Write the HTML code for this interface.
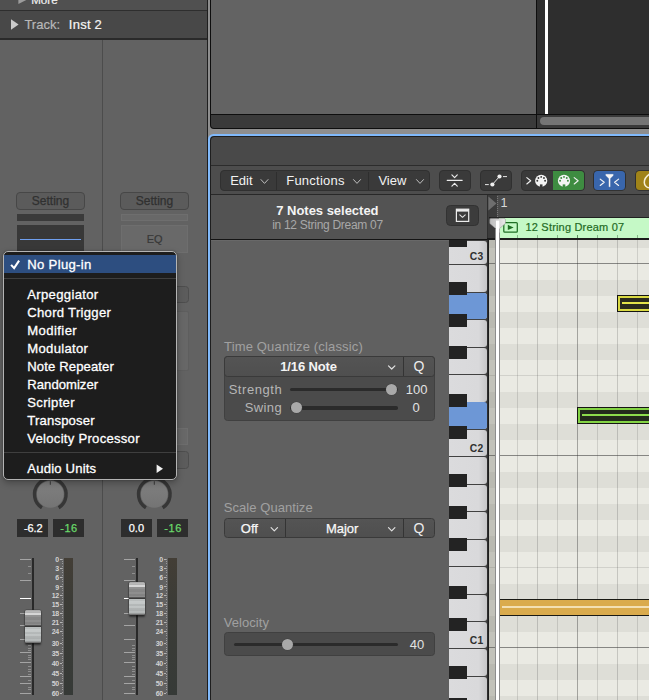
<!DOCTYPE html>
<html><head><meta charset="utf-8"><title>Logic Pro – MIDI FX menu</title>
<style>
html,body{margin:0;padding:0;}
body{width:649px;height:700px;overflow:hidden;position:relative;background:#8e8e8e;font-family:"Liberation Sans",sans-serif;-webkit-font-smoothing:antialiased;}
#root{position:absolute;left:0;top:0;width:649px;height:700px;overflow:hidden;}
#root div,#root svg{position:absolute;}
.t{white-space:nowrap;}
</style></head><body><div id="root">
<div style="left:0px;top:0px;width:207px;height:700px;background:#626262;"></div>
<div style="left:0px;top:0px;width:207px;height:10px;background:#505050;"></div>
<div class="t" style="top:-7.92px;font-size:11.6px;line-height:15px;color:#f0f0f0;left:31.2px;-webkit-text-stroke:0.2px #f0f0f0;">More</div>
<div style="left:0px;top:9.6px;width:207px;height:1.4px;background:#2e2e2e;"></div>
<div style="left:0px;top:11px;width:207px;height:27px;background:#484848;"></div>
<div class="t" style="top:16.00px;font-size:13px;line-height:17px;color:#b8b8b8;letter-spacing:0.02px;left:24.4px;-webkit-text-stroke:0.2px #b8b8b8;">Track:</div>
<div class="t" style="top:16.00px;font-size:13px;line-height:17px;color:#f6f6f6;letter-spacing:0.25px;left:68.8px;-webkit-text-stroke:0.2px #f6f6f6;">Inst 2</div>
<div style="left:0px;top:38px;width:207px;height:1.8px;background:#2a2a2a;"></div>
<svg style="left:0;top:0" width="207" height="40"><polygon points="18.4,-6 18.4,4.1 28.2,-1" fill="#9c9c9c"/><polygon points="11,19.3 11,29.7 18.6,24.5" fill="#cacaca"/></svg>
<div style="left:102px;top:40px;width:1px;height:660px;background:#4c4c4c;"></div>
<div style="left:16px;top:192px;width:69px;height:18px;background:#5b5b5b;box-sizing:border-box;border:1px solid #474747;border-radius:4px;"></div>
<div class="t" style="top:192.74px;font-size:12px;line-height:16px;color:#303030;letter-spacing:0.03px;left:16.5px;width:68px;text-align:center;-webkit-text-stroke:0.25px #303030;">Setting</div>
<div style="left:17px;top:214px;width:67px;height:7px;background:#3a3a3a;"></div>
<div style="left:17px;top:225px;width:67px;height:29px;background:#383838;"></div>
<div style="left:20px;top:239.2px;width:61px;height:1.1px;background:#6f9fee;"></div>
<svg style="left:28px;top:472px" width="46" height="46" viewBox="28 472 46 46"><defs><linearGradient id="kg0" x1="0" y1="0" x2="0" y2="1"><stop offset="0" stop-color="#808080"/><stop offset="1" stop-color="#747474"/></linearGradient></defs><path d="M41.93 507.70 A15.8 15.8 0 1 1 58.67 507.70" fill="none" stroke="#363636" stroke-width="3.4"/><circle cx="50.3" cy="494.3" r="13.4" fill="url(#kg0)"/><line x1="50.3" y1="481.2" x2="50.3" y2="484.8" stroke="#3a3a3a" stroke-width="1"/></svg>
<div style="left:17px;top:519px;width:31px;height:17.6px;background:#2d2d2d;"></div>
<div style="left:53px;top:519px;width:31px;height:17.6px;background:#2d2d2d;"></div>
<div style="left:120px;top:192px;width:69px;height:18px;background:#5b5b5b;box-sizing:border-box;border:1px solid #474747;border-radius:4px;"></div>
<div class="t" style="top:192.74px;font-size:12px;line-height:16px;color:#303030;letter-spacing:0.03px;left:120.5px;width:68px;text-align:center;-webkit-text-stroke:0.25px #303030;">Setting</div>
<div style="left:121px;top:214.2px;width:67px;height:6.6px;background:#686868;box-sizing:border-box;border:1px solid #6e6e6e;"></div>
<div style="left:121px;top:225.2px;width:67px;height:28px;background:#696969;box-sizing:border-box;border:1px solid #6e6e6e;"></div>
<div class="t" style="top:231.79px;font-size:11px;line-height:14px;color:#383838;left:124.6px;width:60px;text-align:center;-webkit-text-stroke:0.2px #383838;">EQ</div>
<div style="left:121px;top:286.4px;width:67.6px;height:16.6px;background:#5c5c5c;box-sizing:border-box;border:1px solid #4e4e4e;border-radius:3.5px;"></div>
<div style="left:121px;top:311px;width:67.6px;height:59.6px;background:#676767;box-sizing:border-box;border:1px solid #5e5e5e;border-radius:2px;"></div>
<div style="left:121px;top:428.2px;width:66.6px;height:17.3px;background:#686868;box-sizing:border-box;border:1px solid #6d6d6d;"></div>
<div style="left:121px;top:451.4px;width:67.6px;height:17.3px;background:#5c5c5c;box-sizing:border-box;border:1px solid #4e4e4e;border-radius:3.5px;"></div>
<svg style="left:132px;top:472px" width="46" height="46" viewBox="132 472 46 46"><defs><linearGradient id="kg104" x1="0" y1="0" x2="0" y2="1"><stop offset="0" stop-color="#808080"/><stop offset="1" stop-color="#747474"/></linearGradient></defs><path d="M145.93 507.70 A15.8 15.8 0 1 1 162.67 507.70" fill="none" stroke="#363636" stroke-width="3.4"/><circle cx="154.3" cy="494.3" r="13.4" fill="url(#kg104)"/><line x1="154.3" y1="481.2" x2="154.3" y2="484.8" stroke="#3a3a3a" stroke-width="1"/></svg>
<div style="left:121px;top:519px;width:31px;height:17.6px;background:#2d2d2d;"></div>
<div style="left:157px;top:519px;width:31px;height:17.6px;background:#2d2d2d;"></div>
<div style="left:20px;top:559px;width:11.4px;height:1.1px;background:#a4a4a4;"></div>
<div style="left:20px;top:580px;width:11.4px;height:1.1px;background:#a4a4a4;"></div>
<div style="left:20px;top:613px;width:11.4px;height:1.1px;background:#a4a4a4;"></div>
<div style="left:20px;top:625px;width:11.4px;height:1.1px;background:#a4a4a4;"></div>
<div style="left:20px;top:639px;width:11.4px;height:1.1px;background:#a4a4a4;"></div>
<div style="left:20px;top:652px;width:11.4px;height:1.1px;background:#a4a4a4;"></div>
<div style="left:20px;top:662px;width:11.4px;height:1.1px;background:#a4a4a4;"></div>
<div style="left:20px;top:676px;width:11.4px;height:1.1px;background:#a4a4a4;"></div>
<div style="left:20px;top:683px;width:11.4px;height:1.1px;background:#a4a4a4;"></div>
<div style="left:20px;top:693px;width:11.4px;height:1.1px;background:#a4a4a4;"></div>
<div style="left:20px;top:597.8px;width:11.4px;height:1.5px;background:#ffffff;"></div>
<div style="left:28px;top:566px;width:3.4px;height:1px;background:#8f8f8f;"></div>
<div style="left:28px;top:573px;width:3.4px;height:1px;background:#8f8f8f;"></div>
<div style="left:28px;top:645px;width:3.4px;height:1px;background:#8f8f8f;"></div>
<div style="left:28px;top:648px;width:3.4px;height:1px;background:#8f8f8f;"></div>
<div style="left:28px;top:650px;width:3.4px;height:1px;background:#8f8f8f;"></div>
<div style="left:28px;top:655px;width:3.4px;height:1px;background:#8f8f8f;"></div>
<div style="left:28px;top:657px;width:3.4px;height:1px;background:#8f8f8f;"></div>
<div style="left:28px;top:659px;width:3.4px;height:1px;background:#8f8f8f;"></div>
<div style="left:28px;top:666px;width:3.4px;height:1px;background:#8f8f8f;"></div>
<div style="left:28px;top:669px;width:3.4px;height:1px;background:#8f8f8f;"></div>
<div style="left:28px;top:671px;width:3.4px;height:1px;background:#8f8f8f;"></div>
<div style="left:28px;top:674px;width:3.4px;height:1px;background:#8f8f8f;"></div>
<div style="left:28px;top:680px;width:3.4px;height:1px;background:#8f8f8f;"></div>
<div style="left:28px;top:687px;width:3.4px;height:1px;background:#8f8f8f;"></div>
<div style="left:28px;top:689px;width:3.4px;height:1px;background:#8f8f8f;"></div>
<div style="left:31.8px;top:558px;width:2.1px;height:136.6px;background:#292929;"></div>
<div style="left:24.7px;top:609.7px;width:16.4px;height:33.6px;background:repeating-linear-gradient(180deg, rgba(0,0,0,0) 0 2.4px, rgba(0,0,0,0.07) 2.4px 4.8px), linear-gradient(180deg,#a2a2a2 0%,#bababa 5%,#c4c4c4 9%,#e6e6e6 10%,#e6e6e6 14%,#939393 16%,#8b8b8b 46%,#3a3a3a 47.5%,#3a3a3a 50.5%,#c9cdcd 52%,#bec2c2 80%,#b2b6b6 95%,#7e7e7e 97%,#7a7a7a 100%);border-radius:1.5px;box-shadow:0 1.5px 2px rgba(0,0,0,0.5), 0 0 0 0.5px rgba(50,50,50,0.55);"></div>
<div class="t" style="top:555.12px;font-size:7px;line-height:9px;color:#d2d2d2;font-weight:700;letter-spacing:-0.35px;left:38.9px;width:20px;text-align:right;">0</div>
<div style="left:60.1px;top:558.95px;width:2.4px;height:1.1px;background:#b4b4b4;"></div>
<div class="t" style="top:564.22px;font-size:7px;line-height:9px;color:#d2d2d2;font-weight:700;letter-spacing:-0.35px;left:38.9px;width:20px;text-align:right;">3</div>
<div style="left:60.1px;top:568.05px;width:2.4px;height:1.1px;background:#b4b4b4;"></div>
<div class="t" style="top:573.32px;font-size:7px;line-height:9px;color:#d2d2d2;font-weight:700;letter-spacing:-0.35px;left:38.9px;width:20px;text-align:right;">6</div>
<div style="left:60.1px;top:577.15px;width:2.4px;height:1.1px;background:#b4b4b4;"></div>
<div class="t" style="top:582.52px;font-size:7px;line-height:9px;color:#d2d2d2;font-weight:700;letter-spacing:-0.35px;left:38.9px;width:20px;text-align:right;">9</div>
<div style="left:60.1px;top:586.35px;width:2.4px;height:1.1px;background:#b4b4b4;"></div>
<div class="t" style="top:591.22px;font-size:7px;line-height:9px;color:#d2d2d2;font-weight:700;letter-spacing:-0.35px;left:38.9px;width:20px;text-align:right;">12</div>
<div style="left:60.1px;top:595.05px;width:2.4px;height:1.1px;background:#b4b4b4;"></div>
<div class="t" style="top:600.22px;font-size:7px;line-height:9px;color:#d2d2d2;font-weight:700;letter-spacing:-0.35px;left:38.9px;width:20px;text-align:right;">15</div>
<div style="left:60.1px;top:604.05px;width:2.4px;height:1.1px;background:#b4b4b4;"></div>
<div class="t" style="top:609.22px;font-size:7px;line-height:9px;color:#d2d2d2;font-weight:700;letter-spacing:-0.35px;left:38.9px;width:20px;text-align:right;">18</div>
<div style="left:60.1px;top:613.05px;width:2.4px;height:1.1px;background:#b4b4b4;"></div>
<div class="t" style="top:618.32px;font-size:7px;line-height:9px;color:#d2d2d2;font-weight:700;letter-spacing:-0.35px;left:38.9px;width:20px;text-align:right;">21</div>
<div style="left:60.1px;top:622.15px;width:2.4px;height:1.1px;background:#b4b4b4;"></div>
<div class="t" style="top:627.32px;font-size:7px;line-height:9px;color:#d2d2d2;font-weight:700;letter-spacing:-0.35px;left:38.9px;width:20px;text-align:right;">24</div>
<div style="left:60.1px;top:631.15px;width:2.4px;height:1.1px;background:#b4b4b4;"></div>
<div class="t" style="top:639.12px;font-size:7px;line-height:9px;color:#d2d2d2;font-weight:700;letter-spacing:-0.35px;left:38.9px;width:20px;text-align:right;">30</div>
<div style="left:60.1px;top:642.95px;width:2.4px;height:1.1px;background:#b4b4b4;"></div>
<div class="t" style="top:649.32px;font-size:7px;line-height:9px;color:#d2d2d2;font-weight:700;letter-spacing:-0.35px;left:38.9px;width:20px;text-align:right;">35</div>
<div style="left:60.1px;top:653.15px;width:2.4px;height:1.1px;background:#b4b4b4;"></div>
<div class="t" style="top:659.12px;font-size:7px;line-height:9px;color:#d2d2d2;font-weight:700;letter-spacing:-0.35px;left:38.9px;width:20px;text-align:right;">40</div>
<div style="left:60.1px;top:662.95px;width:2.4px;height:1.1px;background:#b4b4b4;"></div>
<div class="t" style="top:669.02px;font-size:7px;line-height:9px;color:#d2d2d2;font-weight:700;letter-spacing:-0.35px;left:38.9px;width:20px;text-align:right;">45</div>
<div style="left:60.1px;top:672.85px;width:2.4px;height:1.1px;background:#b4b4b4;"></div>
<div class="t" style="top:679.12px;font-size:7px;line-height:9px;color:#d2d2d2;font-weight:700;letter-spacing:-0.35px;left:38.9px;width:20px;text-align:right;">50</div>
<div style="left:60.1px;top:682.95px;width:2.4px;height:1.1px;background:#b4b4b4;"></div>
<div class="t" style="top:688.82px;font-size:7px;line-height:9px;color:#d2d2d2;font-weight:700;letter-spacing:-0.35px;left:38.9px;width:20px;text-align:right;">60</div>
<div style="left:60.1px;top:692.65px;width:2.4px;height:1.1px;background:#b4b4b4;"></div>
<div style="left:62px;top:559px;width:1px;height:135px;background:repeating-linear-gradient(180deg,#9a9a9a 0 1px,rgba(0,0,0,0) 1px 2.25px);"></div>
<div style="left:63.5px;top:557.8px;width:9.2px;height:137.4px;background:linear-gradient(180deg,#433e36 0%,#3c3c37 30%,#363a37 100%);"></div>
<div style="left:124px;top:559px;width:11.4px;height:1.1px;background:#a4a4a4;"></div>
<div style="left:124px;top:580px;width:11.4px;height:1.1px;background:#a4a4a4;"></div>
<div style="left:124px;top:613px;width:11.4px;height:1.1px;background:#a4a4a4;"></div>
<div style="left:124px;top:625px;width:11.4px;height:1.1px;background:#a4a4a4;"></div>
<div style="left:124px;top:639px;width:11.4px;height:1.1px;background:#a4a4a4;"></div>
<div style="left:124px;top:652px;width:11.4px;height:1.1px;background:#a4a4a4;"></div>
<div style="left:124px;top:662px;width:11.4px;height:1.1px;background:#a4a4a4;"></div>
<div style="left:124px;top:676px;width:11.4px;height:1.1px;background:#a4a4a4;"></div>
<div style="left:124px;top:683px;width:11.4px;height:1.1px;background:#a4a4a4;"></div>
<div style="left:124px;top:693px;width:11.4px;height:1.1px;background:#a4a4a4;"></div>
<div style="left:124px;top:597.8px;width:11.4px;height:1.5px;background:#ffffff;"></div>
<div style="left:132px;top:566px;width:3.4px;height:1px;background:#8f8f8f;"></div>
<div style="left:132px;top:573px;width:3.4px;height:1px;background:#8f8f8f;"></div>
<div style="left:132px;top:645px;width:3.4px;height:1px;background:#8f8f8f;"></div>
<div style="left:132px;top:648px;width:3.4px;height:1px;background:#8f8f8f;"></div>
<div style="left:132px;top:650px;width:3.4px;height:1px;background:#8f8f8f;"></div>
<div style="left:132px;top:655px;width:3.4px;height:1px;background:#8f8f8f;"></div>
<div style="left:132px;top:657px;width:3.4px;height:1px;background:#8f8f8f;"></div>
<div style="left:132px;top:659px;width:3.4px;height:1px;background:#8f8f8f;"></div>
<div style="left:132px;top:666px;width:3.4px;height:1px;background:#8f8f8f;"></div>
<div style="left:132px;top:669px;width:3.4px;height:1px;background:#8f8f8f;"></div>
<div style="left:132px;top:671px;width:3.4px;height:1px;background:#8f8f8f;"></div>
<div style="left:132px;top:674px;width:3.4px;height:1px;background:#8f8f8f;"></div>
<div style="left:132px;top:680px;width:3.4px;height:1px;background:#8f8f8f;"></div>
<div style="left:132px;top:687px;width:3.4px;height:1px;background:#8f8f8f;"></div>
<div style="left:132px;top:689px;width:3.4px;height:1px;background:#8f8f8f;"></div>
<div style="left:135.8px;top:558px;width:2.1px;height:136.6px;background:#292929;"></div>
<div style="left:128.7px;top:581.6px;width:16.4px;height:33.6px;background:repeating-linear-gradient(180deg, rgba(0,0,0,0) 0 2.4px, rgba(0,0,0,0.07) 2.4px 4.8px), linear-gradient(180deg,#a2a2a2 0%,#bababa 5%,#c4c4c4 9%,#e6e6e6 10%,#e6e6e6 14%,#939393 16%,#8b8b8b 46%,#3a3a3a 47.5%,#3a3a3a 50.5%,#c9cdcd 52%,#bec2c2 80%,#b2b6b6 95%,#7e7e7e 97%,#7a7a7a 100%);border-radius:1.5px;box-shadow:0 1.5px 2px rgba(0,0,0,0.5), 0 0 0 0.5px rgba(50,50,50,0.55);"></div>
<div class="t" style="top:555.12px;font-size:7px;line-height:9px;color:#d2d2d2;font-weight:700;letter-spacing:-0.35px;left:142.9px;width:20px;text-align:right;">0</div>
<div style="left:164.1px;top:558.95px;width:2.4px;height:1.1px;background:#b4b4b4;"></div>
<div class="t" style="top:564.22px;font-size:7px;line-height:9px;color:#d2d2d2;font-weight:700;letter-spacing:-0.35px;left:142.9px;width:20px;text-align:right;">3</div>
<div style="left:164.1px;top:568.05px;width:2.4px;height:1.1px;background:#b4b4b4;"></div>
<div class="t" style="top:573.32px;font-size:7px;line-height:9px;color:#d2d2d2;font-weight:700;letter-spacing:-0.35px;left:142.9px;width:20px;text-align:right;">6</div>
<div style="left:164.1px;top:577.15px;width:2.4px;height:1.1px;background:#b4b4b4;"></div>
<div class="t" style="top:582.52px;font-size:7px;line-height:9px;color:#d2d2d2;font-weight:700;letter-spacing:-0.35px;left:142.9px;width:20px;text-align:right;">9</div>
<div style="left:164.1px;top:586.35px;width:2.4px;height:1.1px;background:#b4b4b4;"></div>
<div class="t" style="top:591.22px;font-size:7px;line-height:9px;color:#d2d2d2;font-weight:700;letter-spacing:-0.35px;left:142.9px;width:20px;text-align:right;">12</div>
<div style="left:164.1px;top:595.05px;width:2.4px;height:1.1px;background:#b4b4b4;"></div>
<div class="t" style="top:600.22px;font-size:7px;line-height:9px;color:#d2d2d2;font-weight:700;letter-spacing:-0.35px;left:142.9px;width:20px;text-align:right;">15</div>
<div style="left:164.1px;top:604.05px;width:2.4px;height:1.1px;background:#b4b4b4;"></div>
<div class="t" style="top:609.22px;font-size:7px;line-height:9px;color:#d2d2d2;font-weight:700;letter-spacing:-0.35px;left:142.9px;width:20px;text-align:right;">18</div>
<div style="left:164.1px;top:613.05px;width:2.4px;height:1.1px;background:#b4b4b4;"></div>
<div class="t" style="top:618.32px;font-size:7px;line-height:9px;color:#d2d2d2;font-weight:700;letter-spacing:-0.35px;left:142.9px;width:20px;text-align:right;">21</div>
<div style="left:164.1px;top:622.15px;width:2.4px;height:1.1px;background:#b4b4b4;"></div>
<div class="t" style="top:627.32px;font-size:7px;line-height:9px;color:#d2d2d2;font-weight:700;letter-spacing:-0.35px;left:142.9px;width:20px;text-align:right;">24</div>
<div style="left:164.1px;top:631.15px;width:2.4px;height:1.1px;background:#b4b4b4;"></div>
<div class="t" style="top:639.12px;font-size:7px;line-height:9px;color:#d2d2d2;font-weight:700;letter-spacing:-0.35px;left:142.9px;width:20px;text-align:right;">30</div>
<div style="left:164.1px;top:642.95px;width:2.4px;height:1.1px;background:#b4b4b4;"></div>
<div class="t" style="top:649.32px;font-size:7px;line-height:9px;color:#d2d2d2;font-weight:700;letter-spacing:-0.35px;left:142.9px;width:20px;text-align:right;">35</div>
<div style="left:164.1px;top:653.15px;width:2.4px;height:1.1px;background:#b4b4b4;"></div>
<div class="t" style="top:659.12px;font-size:7px;line-height:9px;color:#d2d2d2;font-weight:700;letter-spacing:-0.35px;left:142.9px;width:20px;text-align:right;">40</div>
<div style="left:164.1px;top:662.95px;width:2.4px;height:1.1px;background:#b4b4b4;"></div>
<div class="t" style="top:669.02px;font-size:7px;line-height:9px;color:#d2d2d2;font-weight:700;letter-spacing:-0.35px;left:142.9px;width:20px;text-align:right;">45</div>
<div style="left:164.1px;top:672.85px;width:2.4px;height:1.1px;background:#b4b4b4;"></div>
<div class="t" style="top:679.12px;font-size:7px;line-height:9px;color:#d2d2d2;font-weight:700;letter-spacing:-0.35px;left:142.9px;width:20px;text-align:right;">50</div>
<div style="left:164.1px;top:682.95px;width:2.4px;height:1.1px;background:#b4b4b4;"></div>
<div class="t" style="top:688.82px;font-size:7px;line-height:9px;color:#d2d2d2;font-weight:700;letter-spacing:-0.35px;left:142.9px;width:20px;text-align:right;">60</div>
<div style="left:164.1px;top:692.65px;width:2.4px;height:1.1px;background:#b4b4b4;"></div>
<div style="left:166px;top:559px;width:1px;height:135px;background:repeating-linear-gradient(180deg,#9a9a9a 0 1px,rgba(0,0,0,0) 1px 2.25px);"></div>
<div style="left:167.5px;top:557.8px;width:9.2px;height:137.4px;background:linear-gradient(180deg,#433e36 0%,#3c3c37 30%,#363a37 100%);"></div>
<div class="t" style="top:520.99px;font-size:11px;line-height:14px;color:#fff;letter-spacing:-0.1px;left:17.7px;width:31px;text-align:center;-webkit-text-stroke:0.25px #fff;">-6.2</div>
<div class="t" style="top:520.99px;font-size:11px;line-height:14px;color:#6ad96a;letter-spacing:0.6px;left:53.5px;width:31px;text-align:center;-webkit-text-stroke:0.25px #6ad96a;">-16</div>
<div class="t" style="top:520.99px;font-size:11px;line-height:14px;color:#fff;left:120.9px;width:31px;text-align:center;-webkit-text-stroke:0.25px #fff;">0.0</div>
<div class="t" style="top:520.99px;font-size:11px;line-height:14px;color:#6ad96a;letter-spacing:0.6px;left:157.6px;width:31px;text-align:center;-webkit-text-stroke:0.25px #6ad96a;">-16</div>
<div style="left:206.6px;top:0px;width:1.5px;height:700px;background:#1e1e1e;"></div>
<div style="left:209.8px;top:-4px;width:445px;height:132.7px;background:#0e0e0e;border-radius:4px;"></div>
<div style="left:211px;top:0px;width:325.2px;height:114px;background:#636363;"></div>
<div style="left:537.4px;top:0px;width:112px;height:114px;background:#2e2e2e;"></div>
<div style="left:544.8px;top:0px;width:3.6px;height:114px;background:#ffffff;"></div>
<div style="left:211px;top:115px;width:325.2px;height:12.6px;background:#3a3a3a;border-radius:0 0 0 3px;"></div>
<div style="left:537.4px;top:115px;width:112px;height:12.6px;background:#3a3a3a;"></div>
<div style="left:540px;top:117.2px;width:120px;height:7.6px;background:#757575;border-radius:4px;"></div>
<div style="left:208.4px;top:134.2px;width:450px;height:580px;background:#80b9fb;border-radius:5.5px;"></div>
<div style="left:210.2px;top:136px;width:450px;height:580px;background:#1e1e1e;border-radius:4px;"></div>
<div style="left:211px;top:136.6px;width:440px;height:29px;background:#494949;border-radius:3.5px 0 0 0;"></div>
<div style="left:211px;top:164.9px;width:440px;height:1.1px;background:#2c2c2c;"></div>
<div style="left:211px;top:166px;width:440px;height:28.4px;background:#4d4d4d;"></div>
<div style="left:211px;top:194.2px;width:440px;height:1.2px;background:#282828;"></div>
<div style="left:211px;top:195.4px;width:276.4px;height:43.2px;background:#535353;"></div>
<div style="left:487.2px;top:195.4px;width:1px;height:505px;background:#2e2e2e;"></div>
<div style="left:488.6px;top:195.4px;width:162px;height:21.6px;background:#4a4a4a;"></div>
<div style="left:488.2px;top:195.4px;width:9px;height:44px;background:#3b3b3b;"></div>
<div style="left:211px;top:238.5px;width:276.4px;height:1.3px;background:#141414;"></div>
<div style="left:487.4px;top:238.4px;width:170px;height:1.5px;background:#1c1c1c;"></div>
<div style="left:211px;top:239.8px;width:237.6px;height:461px;background:#606060;"></div>
<div style="left:211px;top:239.8px;width:237.6px;height:1px;background:#686868;"></div>
<div style="left:219.6px;top:170.4px;width:210.2px;height:20.2px;background:#3a3a3a;box-sizing:border-box;border:1px solid #303030;border-radius:4px;"></div>
<div style="left:275.6px;top:171.6px;width:1px;height:18px;background:#2e2e2e;"></div>
<div style="left:367.7px;top:171.6px;width:1px;height:18px;background:#2e2e2e;"></div>
<div class="t" style="top:172.20px;font-size:13px;line-height:17px;color:#f2f2f2;left:230.2px;">Edit</div>
<div class="t" style="top:172.20px;font-size:13px;line-height:17px;color:#f2f2f2;letter-spacing:0.25px;left:286.2px;">Functions</div>
<div class="t" style="top:172.20px;font-size:13px;line-height:17px;color:#f2f2f2;left:378.4px;">View</div>
<svg style="left:258px;top:175px" width="13" height="13" viewBox="-6.5 -6.5 13 13"><polyline points="-3.5,-1.9 0,1.9 3.5,-1.9" fill="none" stroke="#c0c0c0" stroke-width="1.0" stroke-linecap="round" stroke-linejoin="round"/></svg>
<svg style="left:351px;top:175px" width="12" height="13" viewBox="-6 -6.5 12 13"><polyline points="-3.5,-1.9 0,1.9 3.5,-1.9" fill="none" stroke="#c0c0c0" stroke-width="1.0" stroke-linecap="round" stroke-linejoin="round"/></svg>
<svg style="left:414px;top:175px" width="12" height="13" viewBox="-6 -6.5 12 13"><polyline points="-3.5,-1.9 0,1.9 3.5,-1.9" fill="none" stroke="#c0c0c0" stroke-width="1.0" stroke-linecap="round" stroke-linejoin="round"/></svg>
<div style="left:438.5px;top:170.4px;width:32.2px;height:20.2px;background:#3a3a3a;box-sizing:border-box;border:1px solid #303030;border-radius:4px;"></div>
<svg style="left:438px;top:170px" width="33" height="21" viewBox="438 170 33 21"><g fill="none" stroke="#ececec" stroke-width="1.15" stroke-linecap="round" stroke-linejoin="round"><line x1="447.2" y1="180.3" x2="462.2" y2="180.3"/><polyline points="451.9,174.8 454.6,177.6 457.3,174.8"/><polyline points="451.9,186.1 454.6,183.3 457.3,186.1"/></g></svg>
<div style="left:479.5px;top:170.4px;width:32.2px;height:20.2px;background:#3a3a3a;box-sizing:border-box;border:1px solid #303030;border-radius:4px;"></div>
<svg style="left:479px;top:170px" width="33" height="21" viewBox="479 170 33 21"><g stroke="#e6e6e6" stroke-width="1" stroke-linecap="round"><line x1="485.4" y1="184.6" x2="488.4" y2="184.6"/><line x1="503.4" y1="176.6" x2="506.6" y2="176.6"/><line x1="492.4" y1="184.5" x2="499.5" y2="176.5"/></g><circle cx="492.4" cy="184.5" r="2.1" fill="#f0f0f0"/><circle cx="499.5" cy="176.5" r="2.1" fill="#f0f0f0"/></svg>
<div style="left:520.5px;top:170.4px;width:64px;height:20.2px;background:#3a3a3a;box-sizing:border-box;border:1px solid #303030;border-radius:4px;"></div>
<div style="left:552.8px;top:171.4px;width:31px;height:18.6px;background:#3e8c41;border-radius:0 3.5px 3.5px 0;"></div>
<svg style="left:520px;top:170px" width="65" height="21" viewBox="520 170 65 21"><circle cx="541.2" cy="180.8" r="6.1" fill="#f4f4f4"/><circle cx="537.30" cy="180.80" r="0.95" fill="#3a3a3a"/><circle cx="538.44" cy="178.04" r="0.95" fill="#3a3a3a"/><circle cx="541.20" cy="176.90" r="0.95" fill="#3a3a3a"/><circle cx="543.96" cy="178.04" r="0.95" fill="#3a3a3a"/><circle cx="545.10" cy="180.80" r="0.95" fill="#3a3a3a"/><rect x="539.9000000000001" y="184.4" width="2.6" height="3" fill="#3a3a3a"/><circle cx="564" cy="180.8" r="6.1" fill="#f4f4f4"/><circle cx="560.10" cy="180.80" r="0.95" fill="#3e8c41"/><circle cx="561.24" cy="178.04" r="0.95" fill="#3e8c41"/><circle cx="564.00" cy="176.90" r="0.95" fill="#3e8c41"/><circle cx="566.76" cy="178.04" r="0.95" fill="#3e8c41"/><circle cx="567.90" cy="180.80" r="0.95" fill="#3e8c41"/><rect x="562.7" y="184.4" width="2.6" height="3" fill="#3e8c41"/><g fill="none" stroke="#f0f0f0" stroke-width="1.15" stroke-linecap="round" stroke-linejoin="round"><polyline points="526.8,177.6 530.7,180.8 526.8,184"/><polyline points="574.2,177.6 578.1,180.8 574.2,184"/></g></svg>
<div style="left:594.4px;top:170.9px;width:30.4px;height:19.1px;background:#3966ac;border-radius:3.5px;box-shadow:0 0 0 0.8px #2a2a2a;"></div>
<svg style="left:594px;top:170px" width="31" height="21" viewBox="594 170 31 21"><g fill="none" stroke="#f4f4f4" stroke-width="1.15" stroke-linecap="round" stroke-linejoin="round"><polyline points="600.2,179.1 604.2,182.3 600.2,185.5"/><polyline points="618.6,179.1 614.6,182.3 618.6,185.5"/></g><polygon points="605.8,174.3 613.2,174.3 613.2,175.5 610.15,178.5 610.15,186.8 608.95,186.8 608.95,178.5 605.8,175.5" fill="#f6f6f6" stroke="#f6f6f6" stroke-width="0.3" stroke-linejoin="round"/></svg>
<div style="left:636.1px;top:170.9px;width:29.4px;height:19.1px;background:#a08318;border-radius:3.5px;box-shadow:0 0 0 0.8px #2a2a2a;"></div>
<svg style="left:635px;top:170px" width="15" height="21" viewBox="635 170 15 21"><path d="M649.4 174.2 C646.8 176 644.3 178.8 644.3 182.4 A5.5 5.5 0 0 0 649.8 187.9" fill="none" stroke="#f6efd6" stroke-width="1.5" stroke-linecap="round"/></svg>
<div class="t" style="top:202.00px;font-size:13px;line-height:17px;color:#f4f4f4;font-weight:700;letter-spacing:-0.02px;left:227.4px;width:200px;text-align:center;">7 Notes selected</div>
<div class="t" style="top:216.64px;font-size:12px;line-height:16px;color:#a8a8a8;letter-spacing:-0.29px;left:227.5px;width:200px;text-align:center;">in 12 String Dream 07</div>
<div style="left:446.4px;top:205px;width:32.4px;height:20.6px;background:#3c3c3c;box-sizing:border-box;border:1px solid #323232;border-radius:4.5px;"></div>
<svg style="left:447px;top:205px" width="32" height="21" viewBox="447 205 32 21"><rect x="456.4" y="209.2" width="12.3" height="12.2" fill="none" stroke="#ededed" stroke-width="1.2"/><rect x="456.4" y="209.2" width="12.3" height="2.4" fill="#ededed"/><polyline points="459.8,214.9 462.5,217.3 465.2,214.9" fill="none" stroke="#e4e4e4" stroke-width="1.1" stroke-linecap="round" stroke-linejoin="round"/></svg>
<div class="t" style="top:337.80px;font-size:13px;line-height:17px;color:#a0a0a0;letter-spacing:0.15px;left:224.1px;">Time Quantize (classic)</div>
<div style="left:224.1px;top:356.4px;width:210.5px;height:64.6px;background:#4b4b4b;box-sizing:border-box;border:1px solid #404040;border-radius:3.5px;"></div>
<div style="left:224.1px;top:356.4px;width:210.5px;height:20.2px;background:linear-gradient(180deg,#545454,#4f4f4f);box-sizing:border-box;border:1px solid #3a3a3a;border-radius:3.5px;"></div>
<div style="left:402.7px;top:357.4px;width:1px;height:18.2px;background:#343434;"></div>
<div class="t" style="top:358.00px;font-size:13px;line-height:17px;color:#f4f4f4;font-weight:700;letter-spacing:-0.12px;left:248.6px;width:120px;text-align:center;">1/16 Note</div>
<svg style="left:385px;top:361px" width="13" height="13" viewBox="-6.7 -6.4 13 13"><polyline points="-3.2,-1.6 0,1.6 3.2,-1.6" fill="none" stroke="#e0e0e0" stroke-width="1.2" stroke-linecap="round" stroke-linejoin="round"/></svg>
<div class="t" style="top:357.35px;font-size:14px;line-height:18px;color:#ececec;left:404px;width:30px;text-align:center;">Q</div>
<div class="t" style="top:380.60px;font-size:13px;line-height:17px;color:#b6b6b6;letter-spacing:0.55px;left:202.2px;width:80px;text-align:right;">Strength</div>
<div class="t" style="top:398.80px;font-size:13px;line-height:17px;color:#b6b6b6;letter-spacing:0.4px;left:202.1px;width:80px;text-align:right;">Swing</div>
<div style="left:290px;top:387.8px;width:108px;height:3.6px;background:#2b2b2b;border-radius:1.8px;"></div>
<div style="left:385.6px;top:384px;width:11.2px;height:11.2px;background:#a9a9a9;border-radius:50%;box-shadow:0 0 0 0.6px rgba(60,60,60,0.7);"></div>
<div style="left:290px;top:406px;width:108px;height:3.6px;background:#2b2b2b;border-radius:1.8px;"></div>
<div style="left:290.6px;top:402.2px;width:11.2px;height:11.2px;background:#a9a9a9;border-radius:50%;box-shadow:0 0 0 0.6px rgba(60,60,60,0.7);"></div>
<div class="t" style="top:380.60px;font-size:13px;line-height:17px;color:#e2e2e2;left:396.6px;width:40px;text-align:center;">100</div>
<div class="t" style="top:398.80px;font-size:13px;line-height:17px;color:#e2e2e2;left:396px;width:40px;text-align:center;">0</div>
<div class="t" style="top:498.60px;font-size:13px;line-height:17px;color:#a0a0a0;letter-spacing:0.05px;left:223.8px;">Scale Quantize</div>
<div style="left:224.1px;top:518.2px;width:210.5px;height:20.2px;background:linear-gradient(180deg,#545454,#4f4f4f);box-sizing:border-box;border:1px solid #3a3a3a;border-radius:3.5px;"></div>
<div style="left:285.3px;top:519.2px;width:1px;height:18.2px;background:#343434;"></div>
<div style="left:402.7px;top:519.2px;width:1px;height:18.2px;background:#343434;"></div>
<div class="t" style="top:520.00px;font-size:13px;line-height:17px;color:#f4f4f4;left:229.4px;width:40px;text-align:center;-webkit-text-stroke:0.25px #fff;">Off</div>
<svg style="left:268px;top:523px" width="13" height="13" viewBox="-6.3 -6.2 13 13"><polyline points="-3.2,-1.6 0,1.6 3.2,-1.6" fill="none" stroke="#e0e0e0" stroke-width="1.2" stroke-linecap="round" stroke-linejoin="round"/></svg>
<div class="t" style="top:520.00px;font-size:13px;line-height:17px;color:#f4f4f4;left:312.2px;width:60px;text-align:center;-webkit-text-stroke:0.25px #fff;">Major</div>
<svg style="left:385px;top:523px" width="13" height="13" viewBox="-6.7 -6.2 13 13"><polyline points="-3.2,-1.6 0,1.6 3.2,-1.6" fill="none" stroke="#e0e0e0" stroke-width="1.2" stroke-linecap="round" stroke-linejoin="round"/></svg>
<div class="t" style="top:519.15px;font-size:14px;line-height:18px;color:#ececec;left:404px;width:30px;text-align:center;">Q</div>
<div class="t" style="top:613.60px;font-size:13px;line-height:17px;color:#a0a0a0;letter-spacing:0.05px;left:223.8px;">Velocity</div>
<div style="left:224.1px;top:632.3px;width:210.5px;height:23.8px;background:#4b4b4b;box-sizing:border-box;border:1px solid #404040;border-radius:3.5px;"></div>
<div style="left:234px;top:642.8px;width:164.3px;height:3.6px;background:#2b2b2b;border-radius:1.8px;"></div>
<div style="left:281.6px;top:639px;width:11.2px;height:11.2px;background:#a9a9a9;border-radius:50%;box-shadow:0 0 0 0.6px rgba(60,60,60,0.7);"></div>
<div class="t" style="top:635.80px;font-size:13px;line-height:17px;color:#e2e2e2;left:397px;width:40px;text-align:center;">40</div>
<div style="left:488.6px;top:240.4px;width:170px;height:460px;background:#eaeae3;"></div>
<div style="left:488.6px;top:240.4px;width:170px;height:7.6px;background:#deded7;"></div>
<div style="left:488.6px;top:280px;width:170px;height:16px;background:#deded7;"></div>
<div style="left:488.6px;top:312px;width:170px;height:16px;background:#deded7;"></div>
<div style="left:488.6px;top:344px;width:170px;height:16px;background:#deded7;"></div>
<div style="left:488.6px;top:392px;width:170px;height:16px;background:#deded7;"></div>
<div style="left:488.6px;top:424px;width:170px;height:16px;background:#deded7;"></div>
<div style="left:488.6px;top:472px;width:170px;height:16px;background:#deded7;"></div>
<div style="left:488.6px;top:504px;width:170px;height:16px;background:#deded7;"></div>
<div style="left:488.6px;top:536px;width:170px;height:16px;background:#deded7;"></div>
<div style="left:488.6px;top:584px;width:170px;height:16px;background:#deded7;"></div>
<div style="left:488.6px;top:616px;width:170px;height:16px;background:#deded7;"></div>
<div style="left:488.6px;top:664px;width:170px;height:16px;background:#deded7;"></div>
<div style="left:488.6px;top:696px;width:170px;height:16px;background:#deded7;"></div>
<div style="left:488.6px;top:263px;width:170px;height:1px;background:#868683;"></div>
<div style="left:488.6px;top:455px;width:170px;height:1px;background:#868683;"></div>
<div style="left:488.6px;top:647px;width:170px;height:1px;background:#868683;"></div>
<div style="left:488.6px;top:375px;width:170px;height:1px;background:rgba(60,60,60,0.14);"></div>
<div style="left:488.6px;top:567px;width:170px;height:1px;background:rgba(60,60,60,0.14);"></div>
<div style="left:488.6px;top:240.4px;width:6.8px;height:460px;background:rgba(80,80,70,0.26);"></div>
<div style="left:517px;top:240.4px;width:1px;height:460px;background:rgba(60,60,60,0.16);"></div>
<div style="left:537px;top:240.4px;width:1px;height:460px;background:rgba(50,50,50,0.2);"></div>
<div style="left:557px;top:240.4px;width:1px;height:460px;background:rgba(60,60,60,0.16);"></div>
<div style="left:577px;top:240.4px;width:1px;height:460px;background:rgba(40,40,40,0.37);"></div>
<div style="left:597px;top:240.4px;width:1px;height:460px;background:rgba(60,60,60,0.16);"></div>
<div style="left:617px;top:240.4px;width:1px;height:460px;background:rgba(50,50,50,0.2);"></div>
<div style="left:637px;top:240.4px;width:1px;height:460px;background:rgba(60,60,60,0.16);"></div>
<div style="left:657px;top:240.4px;width:1px;height:460px;background:rgba(40,40,40,0.37);"></div>
<div style="left:488.6px;top:217px;width:170px;height:1px;background:#202020;"></div>
<div style="left:499px;top:218px;width:160px;height:20.4px;background:#c5f9c6;"></div>
<div style="left:517px;top:234.8px;width:1px;height:3.6px;background:#86b888;"></div>
<div style="left:537px;top:234.8px;width:1px;height:3.6px;background:#86b888;"></div>
<div style="left:557px;top:234.8px;width:1px;height:3.6px;background:#86b888;"></div>
<div style="left:577px;top:234.8px;width:1px;height:3.6px;background:#5e8f60;"></div>
<div style="left:597px;top:234.8px;width:1px;height:3.6px;background:#86b888;"></div>
<div style="left:617px;top:234.8px;width:1px;height:3.6px;background:#86b888;"></div>
<div style="left:637px;top:234.8px;width:1px;height:3.6px;background:#86b888;"></div>
<div style="left:657px;top:234.8px;width:1px;height:3.6px;background:#5e8f60;"></div>
<svg style="left:503px;top:221px" width="16" height="13" viewBox="503 221 16 13"><rect x="503.8" y="222.6" width="13.5" height="9.6" rx="1" fill="none" stroke="#1f6f24" stroke-width="1.25"/><polygon points="507.8,224.8 507.8,230 513.6,227.4" fill="#1f6f24"/></svg>
<div class="t" style="top:220.19px;font-size:11px;line-height:14px;color:#1f6b24;letter-spacing:0.19px;left:525.5px;-webkit-text-stroke:0.2px #1f6b24;">12 String Dream 07</div>
<div class="t" style="top:194.53px;font-size:12.6px;line-height:16px;color:#d8d8d8;left:500.6px;">1</div>
<svg style="left:487px;top:195px" width="14" height="24" viewBox="487 195 14 24"><polygon points="488.4,196.6 488.4,210.5 496.5,203.5" fill="#6e6e6e"/><line x1="497.6" y1="196" x2="497.6" y2="218" stroke="#8a8a8a" stroke-width="0.8" stroke-dasharray="1 1"/></svg>
<div style="left:617px;top:295px;width:40px;height:17px;background:#d9d943;box-sizing:border-box;border:1px solid #151512;"></div>
<div style="left:620.4px;top:298.4px;width:40px;height:10.2px;background:#2a2a1e;"></div>
<div style="left:622.1px;top:302.1px;width:40px;height:1.8px;background:#e3e34a;"></div>
<div style="left:577px;top:407px;width:80px;height:17px;background:#83d344;box-sizing:border-box;border:1px solid #151512;"></div>
<div style="left:580.4px;top:410.4px;width:80px;height:10.2px;background:#232a1c;"></div>
<div style="left:582.1px;top:414.1px;width:80px;height:1.8px;background:#8ddc4c;"></div>
<div style="left:499.4px;top:599px;width:160px;height:17px;background:#daab4d;box-sizing:border-box;border:1px solid #1a1a14;border-left:0;"></div>
<div style="left:502px;top:606px;width:160px;height:1.5px;background:#f3e0b4;"></div>
<div style="left:495.4px;top:229px;width:4.5px;height:472px;background:#8d8d8d;"></div>
<div style="left:496px;top:228px;width:3.3px;height:472px;background:#ffffff;"></div>
<svg style="left:488px;top:215px" width="20" height="18" viewBox="488 215 20 18"><defs><linearGradient id="ph" x1="0" y1="0" x2="1" y2="0"><stop offset="0" stop-color="#bdbdbd"/><stop offset="0.5" stop-color="#cfcfcf"/><stop offset="1" stop-color="#ececec"/></linearGradient></defs><path d="M491.2 218.4 h12.8 a1.4 1.4 0 0 1 1.4 1.4 v3.6 l-7.8 6.8 l-7.8 -6.8 v-3.6 a1.4 1.4 0 0 1 1.4 -1.4 z" fill="url(#ph)" stroke="#8a8a8a" stroke-width="0.5" stroke-linejoin="round"/><rect x="496" y="220.6" width="3.3" height="12" fill="#fff"/></svg>
<div style="left:448.6px;top:239.8px;width:38.6px;height:461px;background:#414141;"></div>
<div style="left:448.6px;top:621.971px;width:38.2px;height:26.4286px;background:linear-gradient(90deg,#dbdbdd 0%,#d9d9db 78%,#c6c6c8 100%);border-radius:0 3px 3px 0;"></div>
<div style="left:448.6px;top:594.543px;width:38.2px;height:26.4286px;background:linear-gradient(90deg,#dbdbdd 0%,#d9d9db 78%,#c6c6c8 100%);border-radius:0 3px 3px 0;"></div>
<div style="left:448.6px;top:567.114px;width:38.2px;height:26.4286px;background:linear-gradient(90deg,#dbdbdd 0%,#d9d9db 78%,#c6c6c8 100%);border-radius:0 3px 3px 0;"></div>
<div style="left:448.6px;top:539.686px;width:38.2px;height:26.4286px;background:linear-gradient(90deg,#dbdbdd 0%,#d9d9db 78%,#c6c6c8 100%);border-radius:0 3px 3px 0;"></div>
<div style="left:448.6px;top:512.257px;width:38.2px;height:26.4286px;background:linear-gradient(90deg,#dbdbdd 0%,#d9d9db 78%,#c6c6c8 100%);border-radius:0 3px 3px 0;"></div>
<div style="left:448.6px;top:484.829px;width:38.2px;height:26.4286px;background:linear-gradient(90deg,#dbdbdd 0%,#d9d9db 78%,#c6c6c8 100%);border-radius:0 3px 3px 0;"></div>
<div style="left:448.6px;top:457.4px;width:38.2px;height:26.4286px;background:linear-gradient(90deg,#dbdbdd 0%,#d9d9db 78%,#c6c6c8 100%);border-radius:0 3px 3px 0;"></div>
<div style="left:448.6px;top:429.971px;width:38.2px;height:26.4286px;background:linear-gradient(90deg,#dbdbdd 0%,#d9d9db 78%,#c6c6c8 100%);border-radius:0 3px 3px 0;"></div>
<div style="left:448.6px;top:402.543px;width:38.2px;height:26.4286px;background:linear-gradient(90deg,#dbdbdd 0%,#d9d9db 78%,#c6c6c8 100%);border-radius:0 3px 3px 0;"></div>
<div style="left:448.6px;top:375.114px;width:38.2px;height:26.4286px;background:linear-gradient(90deg,#dbdbdd 0%,#d9d9db 78%,#c6c6c8 100%);border-radius:0 3px 3px 0;"></div>
<div style="left:448.6px;top:347.686px;width:38.2px;height:26.4286px;background:linear-gradient(90deg,#dbdbdd 0%,#d9d9db 78%,#c6c6c8 100%);border-radius:0 3px 3px 0;"></div>
<div style="left:448.6px;top:320.257px;width:38.2px;height:26.4286px;background:linear-gradient(90deg,#dbdbdd 0%,#d9d9db 78%,#c6c6c8 100%);border-radius:0 3px 3px 0;"></div>
<div style="left:448.6px;top:292.829px;width:38.2px;height:26.4286px;background:linear-gradient(90deg,#dbdbdd 0%,#d9d9db 78%,#c6c6c8 100%);border-radius:0 3px 3px 0;"></div>
<div style="left:448.6px;top:265.4px;width:38.2px;height:26.4286px;background:linear-gradient(90deg,#dbdbdd 0%,#d9d9db 78%,#c6c6c8 100%);border-radius:0 3px 3px 0;"></div>
<div style="left:448.6px;top:240.9px;width:38.2px;height:23.5px;background:linear-gradient(90deg,#dbdbdd 0%,#d9d9db 78%,#c6c6c8 100%);border-radius:0 3px 3px 0;"></div>
<div style="left:448.6px;top:649.4px;width:38.2px;height:26.4286px;background:linear-gradient(90deg,#dbdbdd 0%,#d9d9db 78%,#c6c6c8 100%);border-radius:0 3px 3px 0;"></div>
<div style="left:448.6px;top:676.829px;width:38.2px;height:26.4286px;background:linear-gradient(90deg,#dbdbdd 0%,#d9d9db 78%,#c6c6c8 100%);border-radius:0 3px 3px 0;"></div>
<div style="left:448.6px;top:292.6px;width:38.2px;height:26.8px;background:#6d97d6;border-radius:0 3px 3px 0;"></div>
<div style="left:448.6px;top:402.2px;width:38.2px;height:27px;background:#6d97d6;border-radius:0 3px 3px 0;"></div>
<div style="left:448.6px;top:240.4px;width:18.1px;height:6.2px;background:#232323;"></div>
<div style="left:448.6px;top:281.5px;width:18.1px;height:13.1px;background:#232323;"></div>
<div style="left:448.6px;top:313.5px;width:18.1px;height:13.1px;background:#232323;"></div>
<div style="left:448.6px;top:345.5px;width:18.1px;height:13.1px;background:#232323;"></div>
<div style="left:448.6px;top:393.5px;width:18.1px;height:13.1px;background:#232323;"></div>
<div style="left:448.6px;top:425.5px;width:18.1px;height:13.1px;background:#232323;"></div>
<div style="left:448.6px;top:473.5px;width:18.1px;height:13.1px;background:#232323;"></div>
<div style="left:448.6px;top:505.5px;width:18.1px;height:13.1px;background:#232323;"></div>
<div style="left:448.6px;top:537.5px;width:18.1px;height:13.1px;background:#232323;"></div>
<div style="left:448.6px;top:585.5px;width:18.1px;height:13.1px;background:#232323;"></div>
<div style="left:448.6px;top:617.5px;width:18.1px;height:13.1px;background:#232323;"></div>
<div style="left:448.6px;top:665.5px;width:18.1px;height:13.1px;background:#232323;"></div>
<div style="left:448.6px;top:697.5px;width:18.1px;height:13.1px;background:#232323;"></div>
<div class="t" style="top:250.03px;font-size:10.3px;line-height:13px;color:#303030;font-weight:700;letter-spacing:0.4px;left:453.6px;width:30px;text-align:right;">C3</div>
<div class="t" style="top:441.63px;font-size:10.3px;line-height:13px;color:#303030;font-weight:700;letter-spacing:0.4px;left:453.6px;width:30px;text-align:right;">C2</div>
<div class="t" style="top:633.63px;font-size:10.3px;line-height:13px;color:#303030;font-weight:700;letter-spacing:0.4px;left:453.6px;width:30px;text-align:right;">C1</div>
<div style="left:3.4px;top:250.8px;width:173.4px;height:229px;background:#1d1d1d;box-sizing:border-box;border:1px solid #b4b4b4;border-radius:5px;box-shadow:0 3px 7px rgba(0,0,0,0.28), 0 0 2px rgba(0,0,0,0.35);"></div>
<div style="left:4.4px;top:254.8px;width:171.4px;height:17.8px;background:#2d4e80;"></div>
<div style="left:4.4px;top:277.6px;width:171.4px;height:1px;background:#3f3f3f;"></div>
<div style="left:4.4px;top:451.8px;width:171.4px;height:1px;background:#3f3f3f;"></div>
<svg style="left:9px;top:256px" width="14" height="14" viewBox="9 256 14 14"><polyline points="11.1,264.9 14.1,268.1 19.1,260.6" fill="none" stroke="#fff" stroke-width="2.1" stroke-linecap="butt" stroke-linejoin="miter"/></svg>
<div class="t" style="top:256.01px;font-size:13.1px;line-height:17px;color:#fff;letter-spacing:0.317px;left:27.3px;-webkit-text-stroke:0.3px #fff;">No Plug-in</div>
<div class="t" style="top:285.71px;font-size:13.1px;line-height:17px;color:#fff;letter-spacing:0.315px;left:27.3px;-webkit-text-stroke:0.3px #fff;">Arpeggiator</div>
<div class="t" style="top:303.71px;font-size:13.1px;line-height:17px;color:#fff;letter-spacing:0.292px;left:27.3px;-webkit-text-stroke:0.3px #fff;">Chord Trigger</div>
<div class="t" style="top:321.71px;font-size:13.1px;line-height:17px;color:#fff;letter-spacing:0.401px;left:27.3px;-webkit-text-stroke:0.3px #fff;">Modifier</div>
<div class="t" style="top:339.71px;font-size:13.1px;line-height:17px;color:#fff;letter-spacing:0.289px;left:27.3px;-webkit-text-stroke:0.3px #fff;">Modulator</div>
<div class="t" style="top:357.71px;font-size:13.1px;line-height:17px;color:#fff;letter-spacing:0.116px;left:27.3px;-webkit-text-stroke:0.3px #fff;">Note Repeater</div>
<div class="t" style="top:375.71px;font-size:13.1px;line-height:17px;color:#fff;letter-spacing:0.023px;left:27.3px;-webkit-text-stroke:0.3px #fff;">Randomizer</div>
<div class="t" style="top:393.71px;font-size:13.1px;line-height:17px;color:#fff;letter-spacing:0.309px;left:27.3px;-webkit-text-stroke:0.3px #fff;">Scripter</div>
<div class="t" style="top:411.71px;font-size:13.1px;line-height:17px;color:#fff;letter-spacing:0.172px;left:27.3px;-webkit-text-stroke:0.3px #fff;">Transposer</div>
<div class="t" style="top:429.71px;font-size:13.1px;line-height:17px;color:#fff;letter-spacing:0.266px;left:27.3px;-webkit-text-stroke:0.3px #fff;">Velocity Processor</div>
<div class="t" style="top:459.91px;font-size:13.1px;line-height:17px;color:#fff;letter-spacing:0.188px;left:27.3px;-webkit-text-stroke:0.3px #fff;">Audio Units</div>
<svg style="left:155px;top:463px" width="10" height="12" viewBox="155 463 10 12"><polygon points="156.6,464.6 156.6,473 163,468.8" fill="#f0f0f0"/></svg>
</div></body></html>
